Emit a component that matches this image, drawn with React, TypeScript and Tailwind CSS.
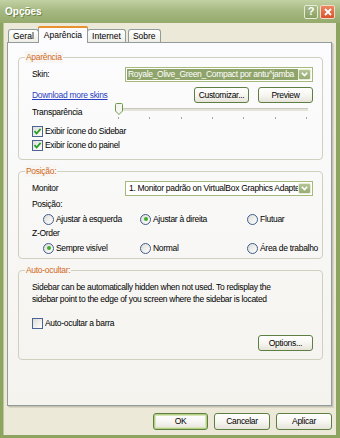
import React from "react";

function Btn({ children, w = "w-[55px]", h = "h-[16px]", def = false }: { children: React.ReactNode; w?: string; h?: string; def?: boolean }) {
  return (
    <div
      className={`${w} ${h} rounded-[3px] border border-[#5E7F42] bg-gradient-to-b from-white via-[#F7F6F2] to-[#E6E4DA] flex items-center justify-center text-black ${
        def ? "shadow-[inset_0_0_0_1px_#B5CF86,inset_0_0_0_2px_#D7E5B7]" : ""
      }`}
    >
      {children}
    </div>
  );
}

function Check({ on, label }: { on?: boolean; label: string }) {
  return (
    <div className="flex items-center gap-[2px]">
      <div className="w-[11px] h-[11px] border border-[#4A6494] bg-gradient-to-br from-[#DEDDD6] to-white flex items-center justify-center">
        {on && (
          <svg width="9" height="9" viewBox="0 0 9 9">
            <path d="M1.5 4.2 L3.6 6.5 L7.6 1.8" stroke="#22A022" strokeWidth="1.8" fill="none" />
          </svg>
        )}
      </div>
      <span>{label}</span>
    </div>
  );
}

function Radio({ on, label }: { on?: boolean; label: string }) {
  return (
    <div className="flex items-center gap-[2px] whitespace-nowrap">
      <div className="w-[11px] h-[11px] shrink-0 rounded-full border border-[#3F5C8E] bg-gradient-to-br from-[#DEDDD6] to-white flex items-center justify-center">
        {on && <div className="w-[4px] h-[4px] rounded-full bg-[#3FAE2A]" />}
      </div>
      <span>{label}</span>
    </div>
  );
}

function Arrow() {
  return (
    <div className="w-[13px] h-full shrink-0 bg-gradient-to-b from-[#B2C493] to-[#97AD74] border border-[#E6ECD9] rounded-[2px] flex items-center justify-center">
      <svg width="7" height="5" viewBox="0 0 7 5">
        <path d="M0.8 0.8 L3.5 3.6 L6.2 0.8" stroke="white" strokeWidth="1.6" fill="none" />
      </svg>
    </div>
  );
}

function Group({ title, children, className = "" }: { title: string; children: React.ReactNode; className?: string }) {
  return (
    <div className={`relative border border-[#D0D0BF] rounded-[4px] pl-[13px] pr-[9px] ${className}`}>
      <span className="absolute left-[6px] top-[-7px] px-[1px] bg-[#F7F6F2] text-[#D2691E] leading-[12px]">{title}</span>
      {children}
    </div>
  );
}

function Tab({ label, active = false }: { label: string; active?: boolean }) {
  if (active) {
    return (
      <div className="relative z-10 -mb-px -mx-px h-[17px] px-[5px] tracking-normal bg-[#FCFCFE] border-x border-[#919B9C] rounded-t-[3px] flex flex-col">
        <div className="h-[2px] -mx-[6px] bg-[#E8912E] rounded-t-[3px]" />
        <div className="flex-1 flex items-center">{label}</div>
      </div>
    );
  }
  return (
    <div className="h-[13px] px-[4px] tracking-normal border border-b-0 border-[#919B9C] rounded-t-[3px] bg-gradient-to-b from-white to-[#EEEDE5] flex items-center">
      {label}
    </div>
  );
}

export default function App() {
  const ticks = [0, 1, 2, 3, 4, 5, 6];
  return (
    <div className="w-[340px] h-[438px] overflow-hidden bg-[#8CA460] flex flex-col font-['Liberation_Sans',Arial,sans-serif] text-[8.5px] tracking-[-0.3px] leading-[11px] text-black">
      {/* title bar */}
      <div className="h-[23px] shrink-0 bg-gradient-to-b from-[#C3D1A3] via-[#A4B781] to-[#95AA6B] flex items-center pl-[5px] pr-[5px]">
        <span className="font-bold text-[10px] tracking-normal text-white [text-shadow:1px_1px_0_#6E8449]">Opções</span>
        <div className="ml-auto flex gap-[2px]">
          <div className="w-[14px] h-[14px] rounded-[2px] border border-[#E4EBD6] bg-gradient-to-b from-[#A9BC88] to-[#8AA163] flex items-center justify-center text-white font-bold text-[11px] tracking-normal">
            ?
          </div>
          <div className="w-[15px] h-[14px] rounded-[2px] border border-[#F3D9C8] bg-gradient-to-b from-[#EC8661] to-[#D8522A] flex items-center justify-center">
            <svg width="8" height="8" viewBox="0 0 8 8">
              <path d="M1 1 L7 7 M7 1 L1 7" stroke="white" strokeWidth="1.8" />
            </svg>
          </div>
        </div>
      </div>

      {/* body */}
      <div className="flex-1 ml-[3px] mr-[4px] mb-[3px] bg-[#ECE9D8] border-l border-[#B9C99B] pl-[3px] pr-[4px] pt-[3px] flex flex-col">
        <div className="flex items-end pl-[1px]">
          <Tab label="Geral" />
          <Tab label="Aparência" active />
          <Tab label="Internet" />
          <div className="ml-[2px]">
            <Tab label="Sobre" />
          </div>
        </div>

        <div className="h-[364px] border border-[#919B9C] shadow-[1px_1px_0_#C5C2B2,2px_2px_0_#D8D5C5] bg-gradient-to-b from-[#FCFCFE] to-[#F4F3EE] pl-[10px] pr-[8px] pt-[14px]">
          <Group title="Aparência" className="pt-[9px] pb-[6px]">
            <div className="h-[15px] flex items-center justify-between">
              <span>Skin:</span>
              <div className="w-[188px] h-[15px] border border-[#A5B97B] bg-white flex items-center p-[1px]">
                <div className="flex-1 h-full bg-[#8FA46A] text-white px-[1px] overflow-hidden whitespace-nowrap leading-[11px]">
                  Royale_Olive_Green_Compact por antu^jamba
                </div>
                <Arrow />
              </div>
            </div>
            <div className="mt-[5px] h-[16px] flex items-center">
              <span className="text-[#2A3FC0] underline">Download more skins</span>
              <div className="ml-auto flex gap-[9px]">
                <Btn>Customizar...</Btn>
                <Btn>Preview</Btn>
              </div>
            </div>
            <div className="h-[18px] flex items-center">
              <span className="w-[83px]">Transparência</span>
              <div className="flex-1 mr-[5px] relative h-full">
                <div className="absolute left-0 right-0 top-[5px] h-[3px] bg-[#E4E3DA] border-t border-[#C9C8BC]" />
                <svg className="absolute left-[0px] top-[0px]" width="8" height="12" viewBox="0 0 8 12">
                  <path d="M0.5 1.5 Q0.5 0.5 1.5 0.5 L6.5 0.5 Q7.5 0.5 7.5 1.5 L7.5 8 L4 11.5 L0.5 8 Z" fill="#F6F6F1" stroke="#6E9A4A" />
                </svg>
                <div className="absolute left-[3px] right-[1px] top-[14px] flex justify-between">
                  {ticks.map((t) => (
                    <div key={t} className="w-px h-[2px] bg-[#A6A59A]" />
                  ))}
                </div>
              </div>
            </div>
            <div className="mt-[3px] h-[14px] flex items-center">
              <Check on label="Exibir ícone do Sidebar" />
            </div>
            <div className="h-[15px] flex items-center">
              <Check on label="Exibir ícone do painel" />
            </div>
          </Group>

          <Group title="Posição:" className="mt-[11px] pt-[9px] pb-[3px]">
            <div className="h-[15px] flex items-center justify-between">
              <span>Monitor</span>
              <div className="w-[188px] h-[15px] border border-[#A5B97B] bg-white flex items-center p-[1px]">
                <div className="flex-1 h-full px-[2px] overflow-hidden whitespace-nowrap leading-[11px]">
                  1. Monitor padrão on VirtualBox Graphics Adapter
                </div>
                <Arrow />
              </div>
            </div>
            <div className="h-[16px] flex items-center">Posição:</div>
            <div className="h-[14px] -mr-[8px] grid grid-cols-[97px_107px_1fr] pl-[11px] items-center overflow-hidden">
              <Radio label="Ajustar à esquerda" />
              <Radio on label="Ajustar à direita" />
              <Radio label="Flutuar" />
            </div>
            <div className="h-[15px] flex items-center">Z-Order</div>
            <div className="h-[14px] -mr-[8px] grid grid-cols-[97px_107px_1fr] pl-[11px] items-center overflow-hidden">
              <Radio on label="Sempre visível" />
              <Radio label="Normal" />
              <Radio label="Área de trabalho" />
            </div>
          </Group>

          <Group title="Auto-ocultar:" className="mt-[11px] pt-[10px] pb-[8px]">
            <p className="leading-[12px]">
              Sidebar can be automatically hidden when not used. To redisplay the
              <br />
              sidebar point to the edge of you screen where the sidebar is located
            </p>
            <div className="mt-[12px] h-[12px] flex items-center">
              <Check label="Auto-ocultar a barra" />
            </div>
            <div className="mt-[6px] flex justify-end">
              <Btn>Options...</Btn>
            </div>
          </Group>
        </div>

        <div className="mt-[7px] flex justify-end gap-[6px]">
          <Btn w="w-[55px]" h="h-[17px]" def>
            OK
          </Btn>
          <Btn w="w-[56px]" h="h-[17px]">
            Cancelar
          </Btn>
          <Btn w="w-[56px]" h="h-[17px]">
            Aplicar
          </Btn>
        </div>
      </div>
    </div>
  );
}
